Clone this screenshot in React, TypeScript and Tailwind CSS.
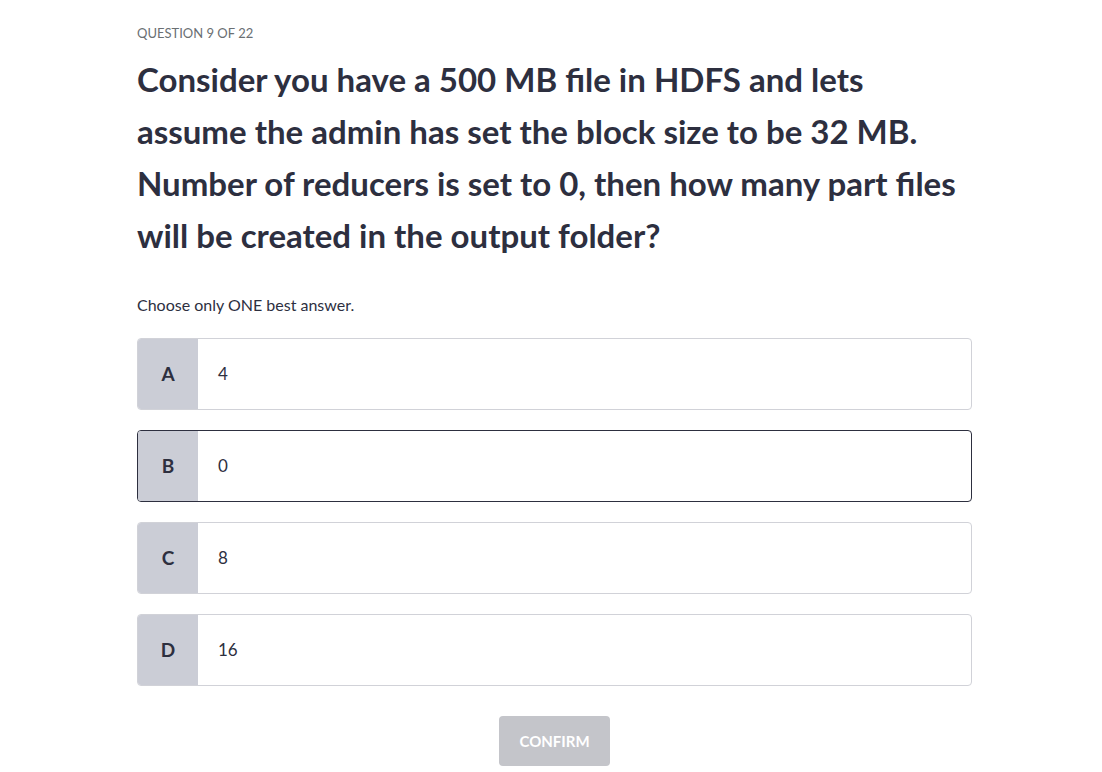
const options = [
  { letter: "A", text: "4" },
  { letter: "B", text: "0" },
  { letter: "C", text: "8" },
  { letter: "D", text: "16" },
];

export default function App() {
  const selected = "B";
  return (
    <div className="min-h-screen bg-white text-[#2d2f3f]" style={{ fontFamily: "Lato, 'Open Sans', sans-serif" }}>
      <div className="w-[835px] ml-[137px] pt-[25px]">
        <div className="text-[13px] leading-4 uppercase text-[#6a6f73]">Question 9 of 22</div>
        <h1 className="mt-[12px] text-[33px] leading-[52px] font-bold text-[#2d2f3f]">
          Consider you have a 500 MB file in HDFS and lets
          <br />
          assume the admin has set the block size to be 32 MB.
          <br />
          Number of reducers is set to 0, then how many part files
          <br />
          will be created in the output folder?
        </h1>
        <p className="mt-[34px] text-[16px] leading-5 text-[#2d2f3f]">Choose only ONE best answer.</p>
        <div className="mt-[23px] flex flex-col gap-5">
          {options.map((o) => (
            <div
              key={o.letter}
              className={`flex h-[72px] rounded overflow-hidden border ${
                o.letter === selected ? "border-[#2d2f3f]" : "border-[#d1d2d8]"
              }`}
            >
              <div className="w-[60px] bg-[#cbcdd6] flex items-center justify-center text-[19px] font-bold">
                {o.letter}
              </div>
              <div className="flex-1 flex items-center pl-5 text-[17px]">{o.text}</div>
            </div>
          ))}
        </div>
        <div className="mt-[30px] flex justify-center">
          <button className="w-[111px] h-[50px] rounded bg-[#c4c5ca] text-white font-bold text-[15px]">CONFIRM</button>
        </div>
      </div>
    </div>
  );
}
